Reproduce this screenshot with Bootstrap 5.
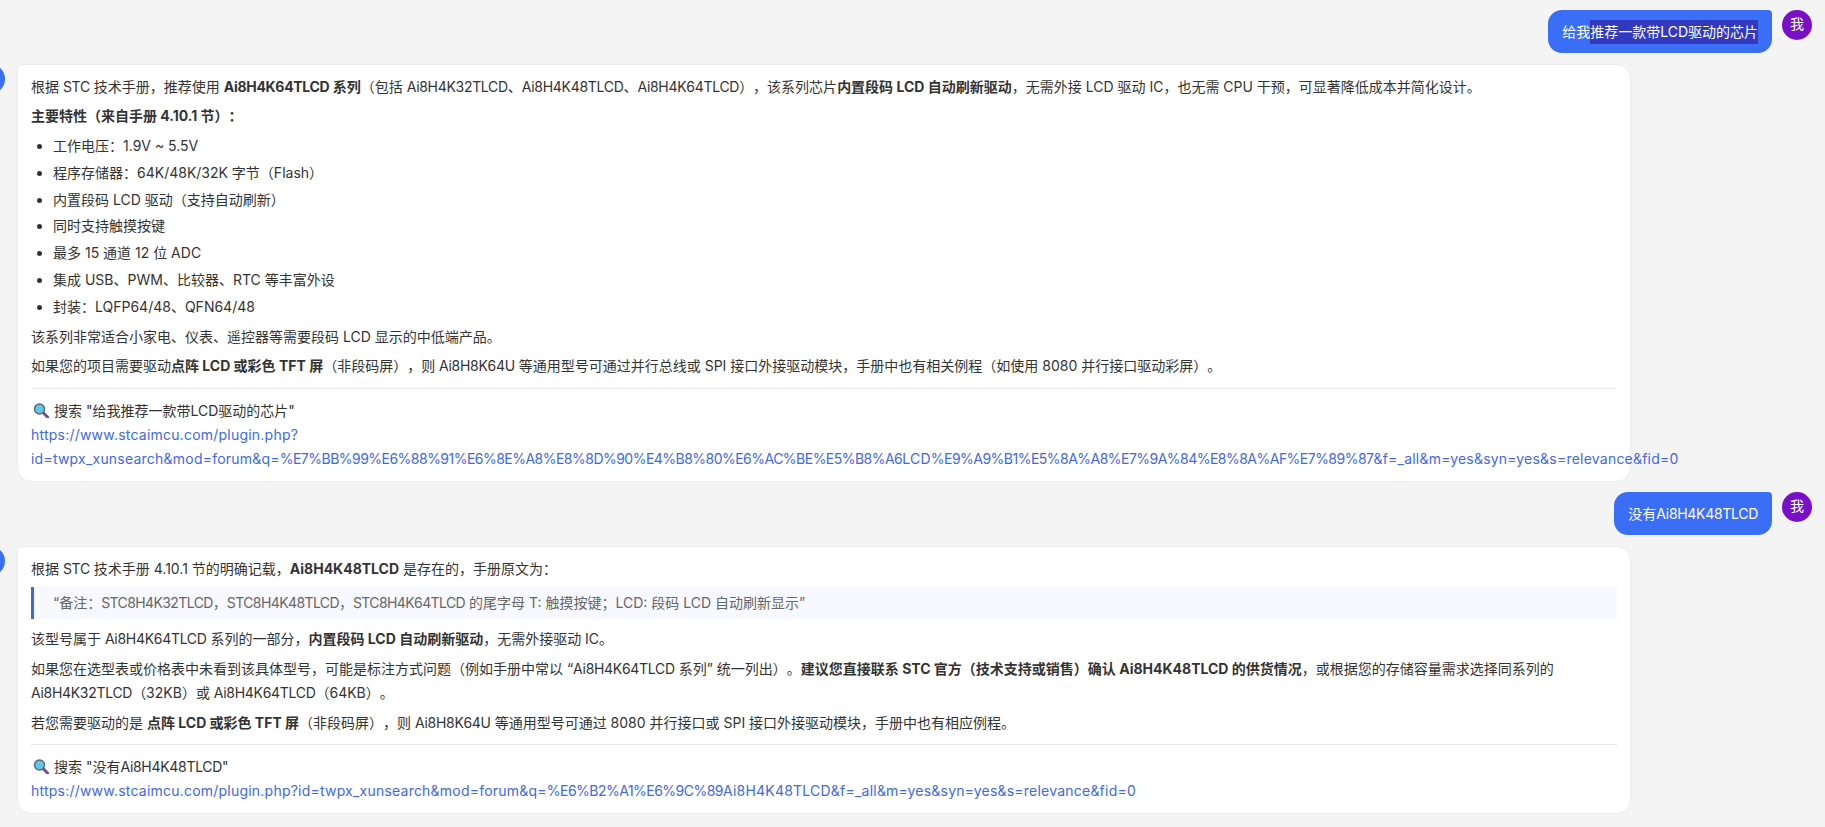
<!DOCTYPE html>
<html lang="zh-CN">
<head>
    <meta charset="UTF-8">
    <meta name="viewport" content="width=device-width, initial-scale=1.0">
    <title>聊天</title>
    <link href="https://cdn.jsdelivr.net/npm/bootstrap@5.3.0/dist/css/bootstrap.min.css" rel="stylesheet">
    <style>
        html, body { height: 100%; }
        body {
            background: #f4f4f5;
            color: #333;
            font-family: Inter, "Noto Sans CJK SC", sans-serif;
            font-size: 14px;
            line-height: 23.8px;
            text-spacing-trim: space-all;
            overflow: hidden;
        }
        .chat { padding: 10px 13px 13px 0; margin-left: -25px; gap: 10.5px; }
        .avatar {
            width: 30px;
            height: 30px;
            flex: 0 0 30px;
            color: #fff;
            font-size: 14px;
            line-height: 28px;
        }
        .avatar-bot { background: #3b6ef6; }
        .avatar-me { background: #7a0fc8; }
        .msg { gap: 12px; }
        .msg-me { gap: 10px; }
        .bubble {
            background: #3b6ef6;
            color: #fff;
            padding: 10px 14px 9px;
            border-radius: 14px 4px 14px 14px;
            line-height: 24px;
        }
        .bubble .picked { background: #3339bd; display: inline-block; }
        .m { letter-spacing: -.3px; }
        .reply {
            flex: 0 0 1614px;
            width: 1614px;
            background: #fff;
            border: 1px solid #ebebed;
            border-radius: 4px 14px 14px 14px;
            padding: 10px 13px;
        }
        .reply p { margin: 0 0 6px; }
        .reply strong { font-weight: 700; }
        .reply ul { margin: 0 0 6px; padding-left: 22px; }
        .reply li { margin-bottom: 3px; }
        .reply li:last-child { margin-bottom: 0; }
        .reply blockquote {
            margin: 7px 0 8px;
            padding: 4px 19px;
            background: #f8f9ff;
            border-left: 3px solid #3b6ae0;
            color: #666;
        }
        .reply blockquote .m { letter-spacing: -.6px; }
        .sources { margin-top: 10px; padding-top: 10px; border-top: 1px solid #e9e9eb; }
        .sources a { color: #4169e1; text-decoration: none; letter-spacing: .22px; }
        .sources a .pct { letter-spacing: -.52px; }
        .lens { width: 16px; height: 15px; margin: 0 5px 0 2px; vertical-align: -2px; }
    </style>
</head>
<body>

<div class="chat d-flex flex-column">

    <div class="msg msg-me d-flex justify-content-end align-items-start">
        <div class="bubble">给我<span class="picked">推荐一款带LCD驱动的芯片</span></div>
        <div class="avatar avatar-me rounded-circle text-center">我</div>
    </div>

    <div class="msg d-flex align-items-start">
        <div class="avatar avatar-bot rounded-circle"></div>
        <div class="reply">
            <p>根据 <span class="m">STC</span> 技术手册，推荐使用 <strong><span class="m">Ai8H4K64TLCD</span> 系列</strong>（包括 <span class="m">Ai8H4K32TLCD</span>、<span class="m">Ai8H4K48TLCD</span>、<span class="m">Ai8H4K64TLCD</span>），该系列芯片<strong>内置段码 LCD 自动刷新驱动</strong>，无需外接 LCD 驱动 IC，也无需 CPU 干预，可显著降低成本并简化设计。</p>
            <p><strong>主要特性（来自手册 4.10.1 节）：</strong></p>
            <ul>
                <li>工作电压：1.9V ~ 5.5V</li>
                <li>程序存储器：64K/48K/32K 字节（Flash）</li>
                <li>内置段码 LCD 驱动（支持自动刷新）</li>
                <li>同时支持触摸按键</li>
                <li>最多 15 通道 12 位 ADC</li>
                <li>集成 USB、PWM、比较器、RTC 等丰富外设</li>
                <li>封装：LQFP64/48、QFN64/48</li>
            </ul>
            <p>该系列非常适合小家电、仪表、遥控器等需要段码 LCD 显示的中低端产品。</p>
            <p class="mb-0">如果您的项目需要驱动<strong>点阵 LCD 或彩色 TFT 屏</strong>（非段码屏），则 <span class="m">Ai8H8K64U</span> 等通用型号可通过并行总线或 SPI 接口外接驱动模块，手册中也有相关例程（如使用 8080 并行接口驱动彩屏）。</p>
            <div class="sources">
                <div><svg class="lens" viewBox="0 0 16 15"><path d="M10 9.5l4.5 4.5" stroke="#7d4a8c" stroke-width="3" stroke-linecap="round"/><circle cx="6.5" cy="6" r="5" fill="#62c6e8" stroke="#5a6b78" stroke-width="1.5"/></svg>搜索 "给我推荐一款带LCD驱动的芯片"</div>
                <a href="#">https://www.stcaimcu.com/plugin.php?id=twpx_xunsearch&amp;mod=forum&amp;q=<span class="pct">%E7%BB%99%E6%88%91%E6%8E%A8%E8%8D%90%E4%B8%80%E6%AC%BE%E5%B8%A6</span>LCD<span class="pct">%E9%A9%B1%E5%8A%A8%E7%9A%84%E8%8A%AF%E7%89%87</span>&amp;f=_all&amp;m=yes&amp;syn=yes&amp;s=relevance&amp;fid=0</a>
            </div>
        </div>
    </div>

    <div class="msg msg-me d-flex justify-content-end align-items-start">
        <div class="bubble">没有<span class="m">Ai8H4K48TLCD</span></div>
        <div class="avatar avatar-me rounded-circle text-center">我</div>
    </div>

    <div class="msg d-flex align-items-start">
        <div class="avatar avatar-bot rounded-circle"></div>
        <div class="reply">
            <p>根据 <span class="m">STC</span> 技术手册 4.10.1 节的明确记载，<strong>Ai8H4K48TLCD</strong> 是存在的，手册原文为：</p>
            <blockquote>“备注：<span class="m">STC8H4K32TLCD</span>，<span class="m">STC8H4K48TLCD</span>，<span class="m">STC8H4K64TLCD</span> 的尾字母 T: 触摸按键；LCD: 段码 LCD 自动刷新显示”</blockquote>
            <p>该型号属于 <span class="m">Ai8H4K64TLCD</span> 系列的一部分，<strong>内置段码 LCD 自动刷新驱动</strong>，无需外接驱动 IC。</p>
            <p>如果您在选型表或价格表中未看到该具体型号，可能是标注方式问题（例如手册中常以 “<span class="m">Ai8H4K64TLCD</span> 系列” 统一列出）。<strong>建议您直接联系 STC 官方（技术支持或销售）确认 Ai8H4K48TLCD 的供货情况</strong>，或根据您的存储容量需求选择同系列的<br><span class="m">Ai8H4K32TLCD</span>（32KB）或 <span class="m">Ai8H4K64TLCD</span>（64KB）。</p>
            <p class="mb-0">若您需要驱动的是 <strong>点阵 LCD 或彩色 TFT 屏</strong>（非段码屏），则 <span class="m">Ai8H8K64U</span> 等通用型号可通过 8080 并行接口或 SPI 接口外接驱动模块，手册中也有相应例程。</p>
            <div class="sources">
                <div><svg class="lens" viewBox="0 0 16 15"><path d="M10 9.5l4.5 4.5" stroke="#7d4a8c" stroke-width="3" stroke-linecap="round"/><circle cx="6.5" cy="6" r="5" fill="#62c6e8" stroke="#5a6b78" stroke-width="1.5"/></svg>搜索 "没有<span class="m">Ai8H4K48TLCD</span>"</div>
                <a href="#">https://www.stcaimcu.com/plugin.php?id=twpx_xunsearch&amp;mod=forum&amp;q=<span class="pct">%E6%B2%A1%E6%9C%89</span>Ai8H4K48TLCD&amp;f=_all&amp;m=yes&amp;syn=yes&amp;s=relevance&amp;fid=0</a>
            </div>
        </div>
    </div>

</div>

<script src="https://cdn.jsdelivr.net/npm/bootstrap@5.3.0/dist/js/bootstrap.bundle.min.js"></script>
</body>
</html>
